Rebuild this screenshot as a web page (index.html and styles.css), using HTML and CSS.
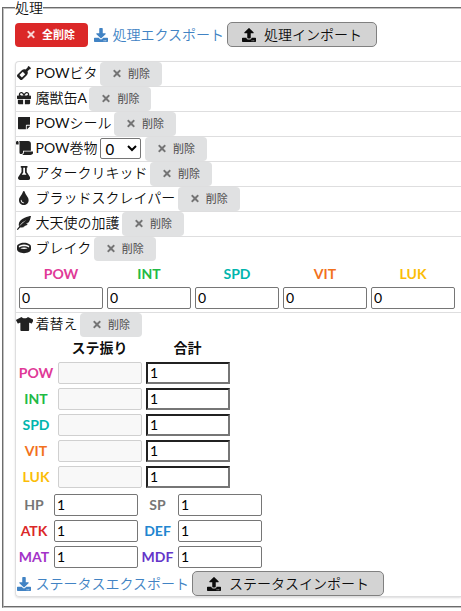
FILE: index.html
```html
<!DOCTYPE html>
<html lang="ja">
<head>
<meta charset="utf-8">
<title>処理</title>
<link rel="stylesheet" href="styles.css">
</head>
<body>
<svg class="sprite" width="0" height="0">
<symbol id="download" viewBox="0 0 512 512"><path fill-rule="evenodd" d="M216 0h80c13.300 0 24 10.700 24 24v168h87.700c17.800 0 26.700 21.500 14.100 34.100L269.700 378.300c-7.500 7.500-19.800 7.500-27.300 0L90.100 226.100c-12.600-12.600-3.700-34.100 14.100-34.100H192V24c0-13.300 10.700-24 24-24zm296 376v112c0 13.300-10.700 24-24 24H24c-13.300 0-24-10.700-24-24V376c0-13.300 10.700-24 24-24h146.700l49 49c20.100 20.100 52.500 20.100 72.600 0l49-49H488c13.300 0 24 10.700 24 24zm-124 88c0-11-9-20-20-20s-20 9-20 20 9 20 20 20 20-9 20-20zm64 0c0-11-9-20-20-20s-20 9-20 20 9 20 20 20 20-9 20-20z"/></symbol>
<symbol id="upload" viewBox="0 0 512 512"><path fill-rule="evenodd" d="M296 384h-80c-13.300 0-24-10.700-24-24V192h-87.700c-17.800 0-26.700-21.500-14.100-34.100L242.300 5.700c7.500-7.500 19.800-7.500 27.300 0l152.200 152.200c12.600 12.600 3.700 34.100-14.100 34.100H320v168c0 13.300-10.700 24-24 24zm216-8v112c0 13.300-10.700 24-24 24H24c-13.300 0-24-10.700-24-24V376c0-13.300 10.700-24 24-24h136v8c0 30.900 25.100 56 56 56h80c30.900 0 56-25.100 56-56v-8h136c13.300 0 24 10.700 24 24zm-124 88c0-11-9-20-20-20s-20 9-20 20 9 20 20 20 20-9 20-20zm64 0c0-11-9-20-20-20s-20 9-20 20 9 20 20 20 20-9 20-20z"/></symbol>
<symbol id="times" viewBox="0 0 352 512"><path d="M242.720 256l100.070-100.070c12.280-12.280 12.280-32.190 0-44.480l-22.240-22.240c-12.280-12.280-32.190-12.280-44.480 0L176 189.280 75.930 89.210c-12.280-12.280-32.190-12.280-44.480 0L9.210 111.450c-12.280 12.280-12.280 32.190 0 44.480L109.280 256 9.210 356.070c-12.280 12.280-12.280 32.190 0 44.480l22.240 22.240c12.280 12.280 32.200 12.280 44.480 0L176 322.720l100.070 100.070c12.280 12.280 32.200 12.280 44.480 0l22.240-22.240c12.280-12.280 12.280-32.190 0-44.480L242.720 256z"/></symbol>
</svg>
<fieldset class="process">
<legend>処理</legend>
<div class="toolbar">
<button class="clear-all"><svg class="x"><use href="#times"/></svg>全削除</button>
<a class="export"><svg class="glyph"><use href="#download"/></svg>処理エクスポート</a>
<label class="import"><svg class="glyph"><use href="#upload"/></svg>処理インポート</label>
</div>
<div class="list">
<div class="item"><div class="line"><i class="icon"><svg viewBox="0 0 512 512"><path d="M507.310 72.570L439.430 4.690c-6.250-6.250-16.380-6.250-22.630 0l-22.630 22.630c-6.250 6.250-6.250 16.380 0 22.630l-76.670 76.670c-46.580-19.700-102.400-10.730-140.370 27.230L18.750 312.230c-24.990 24.990-24.990 65.520 0 90.510l90.510 90.510c24.990 24.990 65.520 24.990 90.510 0l158.390-158.390c37.960-37.960 46.930-93.790 27.230-140.370l76.670-76.670c6.250 6.250 16.380 6.250 22.630 0l22.630-22.630c6.240-6.240 6.240-16.370 0-22.620zM179.220 423.290l-90.510-90.510 122.040-122.040 90.510 90.510-122.040 122.040z" fill-rule="evenodd"/></svg></i><span class="latin">POW</span>ビタ<button class="delete"><svg class="x"><use href="#times"/></svg>削除</button></div></div>
<div class="item"><div class="line"><i class="icon"><svg viewBox="0 0 512 512"><path d="M32 448c0 17.700 14.300 32 32 32h160V320H32v128zm256 32h160c17.700 0 32-14.300 32-32V320H288v160zm192-320h-42.100c6.200-12.100 10.100-25.500 10.100-40 0-48.500-39.500-88-88-88-41.600 0-68.500 21.300-103 68.300-34.500-47-61.400-68.300-103-68.300-48.500 0-88 39.500-88 88 0 14.500 3.800 27.900 10.100 40H32c-17.700 0-32 14.300-32 32v80c0 8.800 7.200 16 16 16h480c8.800 0 16-7.200 16-16v-80c0-17.700-14.300-32-32-32zm-326.100 0c-22.100 0-40-17.900-40-40s17.900-40 40-40c19.900 0 34.600 3.300 86.100 80h-86.100zm206.100 0h-86.100c51.400-76.500 65.700-80 86.100-80 22.100 0 40 17.900 40 40s-17.900 40-40 40z" fill-rule="evenodd"/></svg></i>魔獣缶<span class="latin">A</span><button class="delete"><svg class="x"><use href="#times"/></svg>削除</button></div></div>
<div class="item"><div class="line"><i class="icon"><svg viewBox="0 0 448 512"><path d="M312 320h136V56c0-13.300-10.700-24-24-24H24C10.700 32 0 42.700 0 56v400c0 13.300 10.700 24 24 24h264V344c0-13.200 10.800-24 24-24zm129 55l-98 98c-4.500 4.500-10.600 7-17 7h-6V352h128v6.100c0 6.300-2.500 12.400-7 16.900z"/></svg></i><span class="latin">POW</span>シール<button class="delete"><svg class="x"><use href="#times"/></svg>削除</button></div></div>
<div class="item"><div class="line"><i class="icon"><svg viewBox="0 0 640 512"><path d="M48 0C21.530 0 0 21.530 0 48v64c0 8.840 7.160 16 16 16h80V48C96 21.530 74.470 0 48 0zm208 412.570V352h288V96c0-52.940-43.060-96-96-96H111.590C121.740 13.410 128 29.920 128 48v368c0 38.870 34.650 69.650 74.750 63.120C234.220 474 256 444.460 256 412.570zM288 384v32c0 52.930-43.060 96-96 96h336c61.860 0 112-50.140 112-112 0-8.840-7.160-16-16-16H288z"/></svg></i><span class="latin">POW</span>巻物<select class="level"><option>0</option></select><button class="delete"><svg class="x"><use href="#times"/></svg>削除</button></div></div>
<div class="item"><div class="line"><i class="icon"><svg viewBox="0 0 448 512"><path d="M437.200 403.500L320 215V64h8c13.300 0 24-10.700 24-24V24c0-13.300-10.700-24-24-24H120c-13.300 0-24 10.700-24 24v16c0 13.300 10.700 24 24 24h8v151L10.800 403.500C-18.500 450.600 15.300 512 70.900 512h306.200c55.700 0 89.400-61.500 60.100-108.500zM137.900 320l48.200-77.600c3.700-5.200 5.800-11.600 5.800-18.400V64h64v160c0 6.900 2.200 13.200 5.800 18.400l48.200 77.600h-172z" fill-rule="evenodd"/></svg></i>アタークリキッド<button class="delete"><svg class="x"><use href="#times"/></svg>削除</button></div></div>
<div class="item"><div class="line"><i class="icon"><svg viewBox="0 0 352 512"><path d="M205.220 22.090c-7.940-28.780-49.440-30.120-58.440 0C100.010 179.850 0 222.720 0 333.910 0 432.350 78.720 512 176 512s176-79.650 176-178.090c0-111.750-99.790-153.340-146.780-311.820zM176 448c-61.750 0-112-50.250-112-112 0-8.840 7.160-16 16-16s16 7.160 16 16c0 44.110 35.890 80 80 80 8.840 0 16 7.160 16 16s-7.160 16-16 16z" fill-rule="evenodd"/></svg></i>ブラッドスクレイパー<button class="delete"><svg class="x"><use href="#times"/></svg>削除</button></div></div>
<div class="item"><div class="line"><i class="icon"><svg viewBox="0 0 512 512"><path d="M512 0C460 1 373 22 279 60 155 110 67 190 64 300c-1 28 4 55 12 80C150 270 235 205 340 150 240 225 130 325 5 475c-8 10-6 22 3 30s22 6 30-3l74-84c67 13 127 5 183-34h-72l130-46c18-18 32-38 44-58h-74l108-48c44-76 64-160 81-232z"/></svg></i>大天使の加護<button class="delete"><svg class="x"><use href="#times"/></svg>削除</button></div></div>
<div class="item"><div class="line"><i class="icon"><svg viewBox="0 0 512 512"><path d="M256 64C110.060 64 0 125.910 0 208v98.130C0 384.480 114.620 448 256 448s256-63.520 256-141.870V208c0-82.090-110.060-144-256-144zm0 64c106.040 0 192 35.820 192 80 0 9.260-3.970 18.120-10.910 26.390C392.150 208.210 328.230 192 256 192s-136.150 16.210-181.090 42.390C67.970 226.120 64 217.260 64 208c0-44.180 85.960-80 192-80zM120 264c35-15 83-24 136-24s101 9 136 24c-35 15-83 24-136 24s-101-9-136-24z" fill-rule="evenodd"/></svg></i>ブレイク<button class="delete"><svg class="x"><use href="#times"/></svg>削除</button></div>
<div class="grid break">
<b class="pow">POW</b><b class="int">INT</b><b class="spd">SPD</b><b class="vit">VIT</b><b class="luk">LUK</b>
<input value="0"><input value="0"><input value="0"><input value="0"><input value="0">
</div></div>
<div class="item"><div class="line"><i class="icon"><svg viewBox="0 0 640 512"><path d="M631.200 96.500L436.500 0C416.400 27.800 371.900 47.200 320 47.200S223.600 27.800 203.500 0L8.800 96.500c-7.900 4-11.100 13.600-7.200 21.500l57.200 114.500c4 7.900 13.600 11.100 21.500 7.200l56.600-27.700c10.600-5.200 23 2.500 23 14.400V480c0 17.700 14.300 32 32 32h256c17.700 0 32-14.300 32-32V226.300c0-11.800 12.400-19.600 23-14.400l56.600 27.700c7.900 4 17.500.8 21.500-7.200L638.300 118c4-7.900.8-17.600-7.100-21.500z"/></svg></i>着替え<button class="delete"><svg class="x"><use href="#times"/></svg>削除</button></div>
<div class="grid equip">
<span></span><b>ステ振り</b><b>合計</b>
<b class="pow">POW</b><input disabled><input class="total" value="1">
<b class="int">INT</b><input disabled><input class="total" value="1">
<b class="spd">SPD</b><input disabled><input class="total" value="1">
<b class="vit">VIT</b><input disabled><input class="total" value="1">
<b class="luk">LUK</b><input disabled><input class="total" value="1">
</div>
<div class="grid status">
<b class="hp">HP</b><input value="1"><b class="hp">SP</b><input value="1">
<b class="atk">ATK</b><input value="1"><b class="def">DEF</b><input value="1">
<b class="mat">MAT</b><input value="1"><b class="mdf">MDF</b><input value="1">
</div>
<div class="transfer">
<a class="export"><svg class="glyph"><use href="#download"/></svg>ステータスエクスポート</a>
<label class="import"><svg class="glyph"><use href="#upload"/></svg>ステータスインポート</label>
</div></div>
</div>
</fieldset>
</body>
</html>
```
FILE: styles.css
```css
* { box-sizing: border-box; }
html, body { height: 100%; overflow: hidden; }
body {
  margin: 0;
  padding-left: 2px;
  background: #fff;
  color: rgba(0, 0, 0, .95);
  font: 350 14px/20px Lato, "Noto Sans CJK JP", sans-serif;
}
.sprite { display: block; height: 0; }
svg { fill: currentColor; flex: none; }
.latin { font-weight: 400; }
.process {
  width: 459px;
  height: 608px;
  margin: 0;
  padding: 7px 0 0 11px;
  border: 2px groove #c0c0c0;
  border-right: 0;
  min-width: 0;
}
legend { height: 15px; line-height: 15px; padding: 0; }
.toolbar { display: flex; height: 25px; gap: 3px; align-items: center; }
button, input, select { font-family: inherit; margin: 0; }
button {
  display: flex;
  align-items: center;
  border: 0;
  border-radius: 4px;
  height: 24px;
  padding: 0 12px;
  font-size: 11px;
  line-height: 11px;
}
.x { width: 8px; height: 11px; margin: 0 7px 0 1px; opacity: .8; }
.clear-all { width: 73px; padding: 0 11px; margin-right: 3px; background: #db2828; color: #fff; font-weight: 700; white-space: nowrap; }
.delete { width: 62px; margin-left: 2.5px; padding-bottom: 1px; background: #e0e1e2; color: rgba(0, 0, 0, .6); font-weight: 500; white-space: nowrap; }
.export { display: flex; align-items: center; color: #4183c4; white-space: nowrap; }
.glyph { width: 14px; height: 14px; margin-right: 4.500px; }
.import {
  display: flex;
  align-items: center;
  height: 25px;
  padding: 0 14px;
  border: 1px solid #808080;
  border-radius: 5px;
  background: #d3d3d3;
  white-space: nowrap;
}
.import .glyph { margin-right: 8px; }
.list {
  margin-top: 14px;
  border: 1px solid #dededf;
  border-right: 0;
  border-radius: 4px 0 0 4px;
  box-shadow: 0 1px 2px rgba(34, 36, 38, .15);
}
.item + .item { border-top: 1px solid #dededf; }
.line { display: flex; align-items: flex-start; height: 24px; line-height: 22px; white-space: nowrap; }
.icon { display: flex; align-items: center; justify-content: center; width: 16.500px; height: 22px; margin-right: 3px; color: rgba(0, 0, 0, .87); }
.icon svg { height: 14px; width: auto; }
.level { width: 41px; height: 21px; margin: 1px 1px 0 3px; padding: 0; border: 1px solid #767676; border-radius: 2px; background: #fff; font-size: 15px; font-weight: 400; color: #000; }
.grid { display: grid; justify-content: start; column-gap: 4px; text-align: center; }
.grid b { font-weight: 700; }
.grid input {
  width: 84px;
  height: 22px;
  padding: 0 2px 1px;
  border: 1px solid #767676;
  border-radius: 2px;
  background: #fff;
  color: #000;
  font-size: 14px;
  font-weight: 400;
}
.grid input:disabled { border-color: #d0d0d0; background: #f8f8f8; }
.grid input.total { border: 2px solid; border-color: #212121 #767676 #767676 #212121; border-radius: 0; }
.break { grid-template-columns: repeat(5, 84px); padding: 3px; row-gap: 3px; }
.equip { grid-template-columns: 35px 84px 84px; padding: 1px 3px 3px; row-gap: 4px; align-items: center; }
.status { grid-template-columns: 31px 84px 32px 84px; padding: 3px; row-gap: 4px; align-items: center; }
.equip b, .status b { justify-self: center; transform: translateX(-.5px); }
.transfer { display: flex; align-items: center; height: 25px; padding-left: 1px; gap: 3px; }
.pow { color: #e03997; }
.int { color: #21ba45; }
.spd { color: #00b5ad; }
.vit { color: #f2711c; }
.luk { color: #fbbd08; }
.hp { color: #767676; }
.atk { color: #db2828; }
.def { color: #2185d0; }
.mat { color: #a333c8; }
.mdf { color: #6435c9; }
```
